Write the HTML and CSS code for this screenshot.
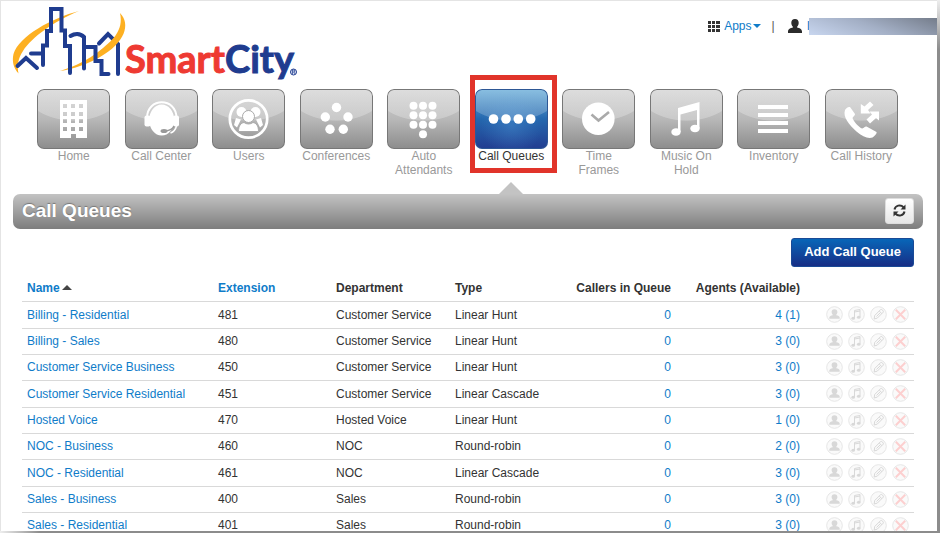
FILE: index.html
```html
<!DOCTYPE html>
<html lang="en">
<head>
<meta charset="utf-8">
<title>SmartCity - Call Queues</title>
<link rel="stylesheet" href="styles.css">
</head>
<body>
<svg class="defs" aria-hidden="true">
  <symbol id="i-user" viewBox="0 0 17 17"><circle cx="8.5" cy="8.5" r="7.8" class="ring"/><path class="fill" d="M8.5 3.200c2 0 2.900 1.300 2.900 2.900 0 1.200-.5 2-1.100 2.600v.5c1.700.3 3.400.9 3.400 2.300v1.200H3.300v-1.200c0-1.400 1.700-2 3.400-2.300v-.5C6.100 8.100 5.600 7.300 5.600 6.100c0-1.600.9-2.900 2.900-2.900z"/></symbol>
  <symbol id="i-music" viewBox="0 0 17 17"><circle cx="8.5" cy="8.5" r="7.8" class="ring"/><path class="line" d="M6.500 12V4.500l5.500-1v7.500M6.500 6l5.500-1"/><ellipse cx="5.200" cy="12.300" rx="1.800" ry="1.500" class="fill"/><ellipse cx="10.700" cy="11.200" rx="1.800" ry="1.500" class="fill"/></symbol>
  <symbol id="i-edit" viewBox="0 0 17 17"><circle cx="8.5" cy="8.5" r="7.8" class="ring"/><path class="line" d="M4.200 13l.5-3.500 6-6c.8-.8 3.400 1.800 2.600 2.600l-6 6zM9.200 5l2.600 2.600M6.500 10.500l3.700-3.700"/></symbol>
  <symbol id="i-delete" viewBox="0 0 17 17"><circle cx="8.5" cy="8.5" r="7.8" class="ring"/><path class="cross" d="M3.800 3.800l9.400 9.400M13.200 3.800l-9.400 9.400"/></symbol>
</svg>
<div class="page">
  <header class="top">
    <a class="brand" href="#" aria-label="SmartCity home">
      <svg width="288" height="76" viewBox="12 5 288 76">
        <path fill="#fdb022" d="M79 11C52 18 19 36 13.500 54c-1.500 6.500-.5 13.500 5 19.500C17 66 18 58 23 51c9-14 30-29 56-40z"/>
        <g fill="none" stroke="#1f3c8f" stroke-width="4" stroke-linecap="round">
          <path d="M99 43.500L108 34l10 10v30"/>
        </g>
        <path fill="#fdb022" d="M120 13c11 11 5 30-20 44-13 7.500-27 12-40 14 16-5 29-12 38-19 14-11 26-21 22-39z"/>
        <g fill="none" stroke="#1f3c8f" stroke-width="4" stroke-linecap="round">
          <path d="M17.500 66L26 58l11 10M31 53.500h12M43 65V45.500h4V31h4V9h10.500v21.500H65V46h5v27"/>
          <path d="M70.500 36c4-2.500 9.500-3 13.500 1v31.500M84 47h11.500v14h6v13h7"/>
        </g>
        <text class="wordmark" y="73"><tspan class="red" x="125">Smart</tspan><tspan class="blue" x="225">City</tspan></text>
        <circle cx="293.500" cy="72" r="3" fill="#dce3f5" stroke="#1f3c8f"/>
        <path d="M292.500 74v-4h1.500l1 1-1 1h-1.500m1.500 0l1 2" fill="none" stroke="#1f3c8f" stroke-width=".7"/>
      </svg>
    </a>
    <div class="account">
      <button class="apps" type="button">
        <svg width="12" height="11" viewBox="0 0 12 11"><path fill="#333" d="M0 0h3v3H0zM4 0h3v3H4zM8 0h4v3H8zM0 4h3v3H0zM4 4h3v3H4zM8 4h4v3H8zM0 8h3v3H0zM4 8h3v3H4zM8 8h4v3H8z"/></svg>
        <span>Apps</span><i class="caret"></i>
      </button>
      <span class="divider">|</span>
      <svg width="14" height="14" viewBox="0 0 14 14"><path fill="#2b2b2b" d="M7 0c2.500 0 3.700 1.600 3.700 3.800 0 1.700-.6 3-1.600 3.900v.8c2.300.5 4.900 1.500 4.900 4V14H0v-1.500c0-2.500 2.600-3.500 4.900-4v-.8c-1-.9-1.600-2.200-1.600-3.900C3.300 1.600 4.500 0 7 0z"/></svg>
      <a class="user" href="#">I</a><span class="redacted"></span>
    </div>
  </header>

  <nav class="tabs">
    <a href="#"><svg class="tile" viewBox="0 0 73 60"><path fill="#fff" fill-rule="evenodd" d="M23 11h27v38H39v-4h-5v4H23zM26 15v4h4v-4zm8 0v4h4v-4zm8 0v4h4v-4zM26 23v4h4v-4zm8 0v4h4v-4zm8 0v4h4v-4zM26 30v4h4v-4zm8 0v4h4v-4zm8 0v4h4v-4zM26 38v4h4v-4zm8 0v4h4v-4zm8 0v4h4v-4z"/></svg><span>Home</span></a>
    <a href="#"><svg class="tile" viewBox="0 0 73 60"><path fill="none" stroke="#fff" stroke-width="2" d="M22 29c0-21 29.500-21 29.500 0"/><ellipse cx="36.700" cy="31" rx="12.500" ry="15.500" fill="#fff"/><rect x="19.500" y="26.500" width="6" height="11" rx="2" fill="#fff"/><rect x="48" y="26.500" width="6" height="11" rx="2" fill="#fff"/><path d="M49 37c-1 3-4 4.500-9 5" fill="none" stroke="#999" stroke-width="1.500"/><ellipse cx="39" cy="42" rx="3.500" ry="2" fill="#999"/><path d="M51.500 37c-1 4-3 6-6 7" fill="none" stroke="#fff" stroke-width="1.500"/></svg><span>Call Center</span></a>
    <a href="#"><svg class="tile" viewBox="0 0 73 60"><circle cx="36.500" cy="30" r="18.700" fill="none" stroke="#fff" stroke-width="2.700"/><g fill="#fff"><circle cx="29.500" cy="23" r="5"/><circle cx="43.500" cy="23" r="5"/><path d="M24 29l5 1.500-4 8-3-2.500zM49 29l-5 1.500 4 8 3-2.500z"/></g><g fill="#fff" stroke="#aaa"><circle cx="36.500" cy="27.500" r="6"/><path d="M26.500 42.500c0-6 2.500-8.500 5.500-9 3 2 6 2 9 0 3 .5 5.500 3 5.500 9z"/></g></svg><span>Users</span></a>
    <a href="#"><svg class="tile" viewBox="0 0 73 60"><g fill="#fff"><circle cx="36.500" cy="18.500" r="4.700"/><circle cx="25.300" cy="28" r="4.700"/><circle cx="48" cy="28" r="4.700"/><circle cx="30" cy="40.300" r="4.700"/><circle cx="43.300" cy="40.300" r="4.700"/></g></svg><span>Conferences</span></a>
    <a href="#"><svg class="tile" viewBox="0 0 73 60"><g fill="#fff"><circle cx="26.500" cy="16.700" r="4"/><circle cx="36" cy="16.700" r="4"/><circle cx="45.500" cy="16.700" r="4"/><circle cx="26.500" cy="26.200" r="4"/><circle cx="36" cy="26.200" r="4"/><circle cx="45.500" cy="26.200" r="4"/><circle cx="26.500" cy="35.700" r="4"/><circle cx="36" cy="35.700" r="4"/><circle cx="45.500" cy="35.700" r="4"/><circle cx="36" cy="45.200" r="4"/></g></svg><span>Auto<br>Attendants</span></a>
    <a href="#" class="active" aria-current="page"><svg class="tile" viewBox="0 0 73 60"><g fill="#fff"><circle cx="18.500" cy="30" r="4.800"/><circle cx="31" cy="30" r="4.800"/><circle cx="43.300" cy="30" r="4.800"/><circle cx="55.700" cy="30" r="4.800"/></g></svg><span>Call Queues</span></a>
    <a href="#"><svg class="tile" viewBox="0 0 73 60"><circle cx="36.300" cy="29.700" r="16.300" fill="#fff"/><path d="M29.500 25.500l7 6 10.500-8.500" fill="none" stroke="#aaa" stroke-width="2.600"/></svg><span>Time<br>Frames</span></a>
    <a href="#"><svg class="tile" viewBox="0 0 73 60"><path fill="#fff" d="M28 19l21.500-6v26h-2.500V21l-16.500 4.500V43H28z"/><ellipse cx="26" cy="43" rx="4.700" ry="3.800" fill="#fff"/><ellipse cx="45" cy="39.500" rx="4.700" ry="3.800" fill="#fff"/></svg><span>Music On<br>Hold</span></a>
    <a href="#"><svg class="tile" viewBox="0 0 73 60"><path fill="#fff" d="M21 16h30v4H21zM21 24h30v4H21zM21 32h30v4H21zM21 40h30v4H21z"/></svg><span>Inventory</span></a>
    <a href="#"><svg class="tile" viewBox="0 0 73 60"><g fill="#fff"><path d="M20 21c1-2 3-3.500 5-3l5 7c.3 1.500-2 2.500-2.500 4 1.500 4 5.500 8.500 9.500 10.500 1.500 0 3-2.500 4.500-2l10 5.500c.8 1-2 4.500-4 5.500-4 1.500-10-.5-16-6-7-6.500-14-14.500-11.500-21.500z"/><path d="M45 12.500l3.500 3.500-5.500 5 2.500 3.500H35.800V15l3.700 2.500z"/><path d="M41.500 30.500l5.500-5-2.500-3H54v9l-3-2.500-6 5.500z"/></g></svg><span>Call History</span></a>
  </nav>

  <main>
    <div class="bar">
      <h1>Call Queues</h1>
      <button class="refresh" type="button" aria-label="Refresh">
        <svg width="13" height="13" viewBox="0 0 13 13"><g fill="none" stroke="#333" stroke-width="2"><path d="M1.500 5.500c.8-4 6-5.500 9-2.300M11.500 7.500c-.8 4-6 5.500-9 2.300"/></g><path fill="#333" d="M12.500.5v5h-5zM.5 12.500v-5h5z"/></svg>
      </button>
    </div>
    <div class="content">
      <div class="tools"><button class="add" type="button">Add Call Queue</button></div>
      <table>
        <colgroup><col><col class="c-ext"><col class="c-dept"><col class="c-type"><col class="c-callers"><col class="c-agents"><col class="c-actions"></colgroup>
        <thead>
          <tr><th><a href="#">Name<i class="sort"></i></a></th><th><a href="#">Extension</a></th><th>Department</th><th>Type</th><th class="num">Callers in Queue</th><th class="num">Agents (Available)</th><th></th></tr>
        </thead>
        <tbody>
          <tr><td><a href="#">Billing - Residential</a></td><td>481</td><td>Customer Service</td><td>Linear Hunt</td><td class="num"><a href="#">0</a></td><td class="num"><a href="#">4 (1)</a></td><td><div class="actions"><button type="button" aria-label="Agents"><svg><use href="#i-user"/></svg></button><button type="button" aria-label="Music"><svg><use href="#i-music"/></svg></button><button type="button" aria-label="Edit"><svg><use href="#i-edit"/></svg></button><button type="button" aria-label="Delete"><svg><use href="#i-delete"/></svg></button></div></td></tr>
          <tr><td><a href="#">Billing - Sales</a></td><td>480</td><td>Customer Service</td><td>Linear Hunt</td><td class="num"><a href="#">0</a></td><td class="num"><a href="#">3 (0)</a></td><td><div class="actions"><button type="button" aria-label="Agents"><svg><use href="#i-user"/></svg></button><button type="button" aria-label="Music"><svg><use href="#i-music"/></svg></button><button type="button" aria-label="Edit"><svg><use href="#i-edit"/></svg></button><button type="button" aria-label="Delete"><svg><use href="#i-delete"/></svg></button></div></td></tr>
          <tr><td><a href="#">Customer Service Business</a></td><td>450</td><td>Customer Service</td><td>Linear Hunt</td><td class="num"><a href="#">0</a></td><td class="num"><a href="#">3 (0)</a></td><td><div class="actions"><button type="button" aria-label="Agents"><svg><use href="#i-user"/></svg></button><button type="button" aria-label="Music"><svg><use href="#i-music"/></svg></button><button type="button" aria-label="Edit"><svg><use href="#i-edit"/></svg></button><button type="button" aria-label="Delete"><svg><use href="#i-delete"/></svg></button></div></td></tr>
          <tr><td><a href="#">Customer Service Residential</a></td><td>451</td><td>Customer Service</td><td>Linear Cascade</td><td class="num"><a href="#">0</a></td><td class="num"><a href="#">3 (0)</a></td><td><div class="actions"><button type="button" aria-label="Agents"><svg><use href="#i-user"/></svg></button><button type="button" aria-label="Music"><svg><use href="#i-music"/></svg></button><button type="button" aria-label="Edit"><svg><use href="#i-edit"/></svg></button><button type="button" aria-label="Delete"><svg><use href="#i-delete"/></svg></button></div></td></tr>
          <tr><td><a href="#">Hosted Voice</a></td><td>470</td><td>Hosted Voice</td><td>Linear Hunt</td><td class="num"><a href="#">0</a></td><td class="num"><a href="#">1 (0)</a></td><td><div class="actions"><button type="button" aria-label="Agents"><svg><use href="#i-user"/></svg></button><button type="button" aria-label="Music"><svg><use href="#i-music"/></svg></button><button type="button" aria-label="Edit"><svg><use href="#i-edit"/></svg></button><button type="button" aria-label="Delete"><svg><use href="#i-delete"/></svg></button></div></td></tr>
          <tr><td><a href="#">NOC - Business</a></td><td>460</td><td>NOC</td><td>Round-robin</td><td class="num"><a href="#">0</a></td><td class="num"><a href="#">2 (0)</a></td><td><div class="actions"><button type="button" aria-label="Agents"><svg><use href="#i-user"/></svg></button><button type="button" aria-label="Music"><svg><use href="#i-music"/></svg></button><button type="button" aria-label="Edit"><svg><use href="#i-edit"/></svg></button><button type="button" aria-label="Delete"><svg><use href="#i-delete"/></svg></button></div></td></tr>
          <tr><td><a href="#">NOC - Residential</a></td><td>461</td><td>NOC</td><td>Linear Cascade</td><td class="num"><a href="#">0</a></td><td class="num"><a href="#">3 (0)</a></td><td><div class="actions"><button type="button" aria-label="Agents"><svg><use href="#i-user"/></svg></button><button type="button" aria-label="Music"><svg><use href="#i-music"/></svg></button><button type="button" aria-label="Edit"><svg><use href="#i-edit"/></svg></button><button type="button" aria-label="Delete"><svg><use href="#i-delete"/></svg></button></div></td></tr>
          <tr><td><a href="#">Sales - Business</a></td><td>400</td><td>Sales</td><td>Round-robin</td><td class="num"><a href="#">0</a></td><td class="num"><a href="#">3 (0)</a></td><td><div class="actions"><button type="button" aria-label="Agents"><svg><use href="#i-user"/></svg></button><button type="button" aria-label="Music"><svg><use href="#i-music"/></svg></button><button type="button" aria-label="Edit"><svg><use href="#i-edit"/></svg></button><button type="button" aria-label="Delete"><svg><use href="#i-delete"/></svg></button></div></td></tr>
          <tr><td><a href="#">Sales - Residential</a></td><td>401</td><td>Sales</td><td>Round-robin</td><td class="num"><a href="#">0</a></td><td class="num"><a href="#">3 (0)</a></td><td><div class="actions"><button type="button" aria-label="Agents"><svg><use href="#i-user"/></svg></button><button type="button" aria-label="Music"><svg><use href="#i-music"/></svg></button><button type="button" aria-label="Edit"><svg><use href="#i-edit"/></svg></button><button type="button" aria-label="Delete"><svg><use href="#i-delete"/></svg></button></div></td></tr>
        </tbody>
      </table>
    </div>
  </main>
</div>
</body>
</html>
```
FILE: styles.css
```css
* { box-sizing: border-box; }

body {
  margin: 0;
  height: 100vh;
  overflow: hidden;
  padding: 0 3px 2px 0;
  background:
    linear-gradient(90deg, #eee, #8c8c8c 40px) left bottom / 100% 2px no-repeat,
    linear-gradient(180deg, #eee, #8c8c8c 50px) right top / 3px 100% no-repeat;
  color: #333;
  font: 12px/18px "Liberation Sans", Arial, sans-serif;
}

a { color: #0f7cc9; text-decoration: none; }
button { font-family: inherit; cursor: pointer; }
.defs { position: absolute; width: 0; height: 0; }

.page {
  height: 100%;
  overflow: hidden;
  padding: 0 14px 0 12px;
  border-top: 1px solid #e4e4e4;
  border-left: 1px solid #e4e4e4;
  background: #fff;
}

/* Header */
.top { display: flex; justify-content: space-between; align-items: flex-start; height: 88px; }
.brand { margin: 4px 0 0 -1px; }
.brand svg { display: block; }
.wordmark { font: 700 38px "Lato", sans-serif; stroke-width: 1; }
.red { fill: #ee3a32; stroke: #ee3a32; }
.blue { fill: #1f3c8f; stroke: #1f3c8f; }

.account { display: flex; align-items: center; margin: 15px -15px 0 0; height: 20px; }
.apps {
  display: flex;
  align-items: center;
  gap: 4px;
  padding: 0;
  border: 0;
  background: none;
  color: #0f7cc9;
  font-size: 12px;
}
.caret { margin-left: -3px; border: 4px solid transparent; border-top-color: #0f7cc9; border-bottom: 0; }
.divider { margin: 0 13px 0 11px; color: #555; }
.user { margin-left: 5px; }
.redacted { width: 129px; height: 17px; margin-left: -1px; background: linear-gradient(200deg, #747c8a, #a3afc5 50%, #c8d6ef); }

/* Tabs */
.tabs { display: grid; grid-template-columns: repeat(10, 1fr); margin: 0 18px 0 17px; }
.tabs a {
  position: relative;
  display: flex;
  flex-direction: column;
  align-items: center;
  padding-bottom: 17px;
  color: #999;
  line-height: 14px;
  text-align: center;
}
.tile {
  width: 73px;
  height: 60px;
  border-radius: 7px;
  box-shadow: inset 0 0 0 1px #777;
  background:
    radial-gradient(ellipse 56px 42px at 50% -10px, rgba(255, 255, 255, .25) 98%, transparent),
    linear-gradient(#d2d2d2, #b8b8b8 50%, #8c8c8c);
}
.active .tile {
  box-shadow: inset 0 0 0 1px #2d5795;
  background:
    radial-gradient(ellipse 56px 42px at 50% -10px, rgba(255, 255, 255, .2) 98%, transparent),
    radial-gradient(ellipse at 50% 60%, rgba(80, 150, 215, .4), transparent 60%),
    linear-gradient(#6db0da, #2467ae 50%, #223c90);
}
.tabs .active { color: #333; }
.active::before {
  content: "";
  position: absolute;
  inset: -14px -2px 21px 2px;
  border: 5px solid #e1342a;
}
.active::after {
  content: "";
  position: absolute;
  bottom: 0;
  border: 12px solid transparent;
  border-top: 0;
  border-bottom-color: #c3c3c3;
}

/* Title bar */
.bar {
  display: flex;
  align-items: center;
  justify-content: space-between;
  height: 35px;
  padding: 0 9px 2px;
  border-radius: 7px;
  background: linear-gradient(#c3c3c3, #7d7d7d);
}
.bar h1 { margin: 0; color: #fff; font-size: 19px; line-height: 24px; text-shadow: 0 -1px 1px #777; }
.refresh {
  display: flex;
  align-items: center;
  justify-content: center;
  width: 29px;
  height: 26px;
  padding: 0;
  border: 1px solid #ddd;
  border-radius: 3px;
  background: linear-gradient(#fff, #e6e6e6);
}

/* Table */
.content { padding: 9px 9px 0; }
.tools { display: flex; justify-content: flex-end; margin-bottom: 8px; }
.add {
  height: 29px;
  padding: 0 12px 2px;
  border: 1px solid #1a4a96;
  border-radius: 3px;
  background: linear-gradient(#0866b8, #172e86);
  color: #fff;
  font-size: 13px;
  font-weight: bold;
}
table { width: 100%; border-collapse: collapse; table-layout: fixed; }
.c-ext { width: 118px; }
.c-dept { width: 119px; }
.c-type { width: 100px; }
.c-callers { width: 126px; }
.c-agents { width: 129px; }
.c-actions { width: 109px; }
th, td { height: 26px; padding: 0 5px; border-bottom: 1px solid #d9d9d9; text-align: left; white-space: nowrap; }
tbody tr:nth-child(3n + 1) td { height: 27px; }
th.num, td.num { text-align: right; }
.sort { display: inline-block; margin: 0 0 2px 2px; border: 5px solid transparent; border-top: 0; border-bottom-color: #444; }
.actions { display: flex; justify-content: flex-end; gap: 5px; }
.actions button { width: 17px; height: 17px; padding: 0; border: 0; background: none; }
.actions svg { display: block; width: 17px; height: 17px; }
.ring { fill: #fafafa; stroke: #e6e6e6; }
.fill { fill: #d8d8d8; }
.line { fill: none; stroke: #d8d8d8; }
.cross { fill: none; stroke: #fccfcf; stroke-width: 2; }
```
